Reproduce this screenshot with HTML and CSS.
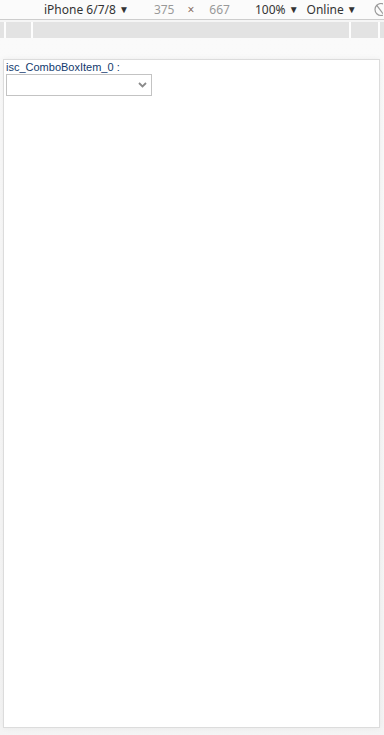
FILE: index.html
```html
<!DOCTYPE html>
<html>
<head>
<meta charset="utf-8">
<link rel="stylesheet" href="styles.css">
</head>
<body>
<div class="toolbar">
  <span class="tb-device">iPhone 6/7/8 <span class="caret">▼</span></span>
  <span class="tb-dim tb-w">375</span>
  <span class="tb-x">×</span>
  <span class="tb-dim tb-h">667</span>
  <span class="tb-zoom">100% <span class="caret">▼</span></span>
  <span class="tb-net">Online <span class="caret">▼</span></span>
  <svg class="tb-rot" width="10" height="14" viewBox="0 0 10 14"><circle cx="8" cy="6.5" r="6" fill="none" stroke="#9a9a9a" stroke-width="1.2"/><path d="M3.8 2.3 L10 10.7" stroke="#9a9a9a" stroke-width="1.2"/></svg>
</div>
<div class="rule"></div>
<div class="ruler">
  <div class="seg"></div><div class="seg"></div><div class="seg"></div><div class="seg"></div><div class="seg"></div>
</div>
<div class="stage">
  <div class="frame">
    <div class="form-item">
      <div class="label">isc_ComboBoxItem_0 :</div>
      <div class="combo" role="combobox">
        <svg class="chev" width="9" height="6" viewBox="0 0 9 6"><path d="M1 1 L4.5 4.5 L8 1" fill="none" stroke="#8a8a8a" stroke-width="1.8"/></svg>
      </div>
    </div>
  </div>
</div>
</body>
</html>
```

FILE: styles.css
```css
html, body {
  margin: 0;
  padding: 0;
}
body {
  width: 384px;
  height: 735px;
  overflow: hidden;
  background: #f5f5f5;
  font-family: "Noto Sans", "Open Sans", sans-serif;
}
.toolbar {
  height: 19px;
  background: #fbfbfb;
  display: flex;
  align-items: center;
  font-size: 12px;
  line-height: 14px;
  color: #333;
  white-space: nowrap;
  overflow: hidden;
}
.caret {
  font-size: 10px;
  color: #333;
  position: relative;
  top: -1px;
}
.tb-device { margin-left: 44px; }
.tb-dim { color: #999; }
.tb-w { margin-left: 25px; }
.tb-x { margin-left: 13px; color: #8a6f5e; font-size: 12px; }
.tb-h { margin-left: 15px; }
.tb-zoom { margin-left: 25px; }
.tb-net { margin-left: 8px; }
.tb-rot { margin-left: 16px; flex: none; }
.rule {
  height: 1px;
  background: #cdcdcd;
}
.ruler {
  margin-top: 2px;
  height: 16px;
  display: grid;
  grid-template-columns: 4px 25px 316px 27px 1fr;
  column-gap: 2px;
  background: #fdfdfd;
}
.seg { background: #e3e3e3; }
.stage {
  padding: 21px 0 0 3px;
  background: linear-gradient(#fafafa, #f4f4f4);
  height: 697px;
}
.frame {
  width: 375px;
  height: 667px;
  background: #fff;
  border: 1px solid #dcdcdc;
  box-shadow: 0 0 6px rgba(0,0,0,0.06);
}
.form-item {
  padding: 1px 0 0 2px;
}
.label {
  font-family: "Liberation Sans", Arial, sans-serif;
  font-size: 11px;
  line-height: 13px;
  color: #123a6e;
}
.combo {
  width: 146px;
  height: 22px;
  box-sizing: border-box;
  border: 1px solid #c3c3c3;
  display: flex;
  align-items: center;
  justify-content: flex-end;
  padding-right: 4px;
  background: #fff;
}
.chev { display: block; }
```
